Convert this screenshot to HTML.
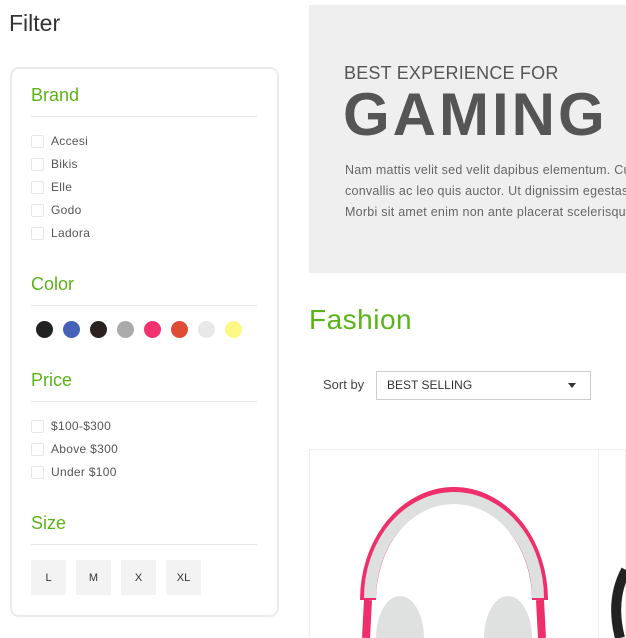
<!DOCTYPE html>
<html><head><style>
html,body{margin:0;width:626px;height:638px;overflow:hidden}
body{background:#fff;font-family:"Liberation Sans",sans-serif;position:relative;color:#555}
.a{position:absolute}
h1{position:absolute;left:9px;top:10px;margin:0;font-weight:normal;font-size:23px;color:#333}
.card{position:absolute;left:10px;top:67px;width:265px;height:546px;border:2px solid #ebebeb;border-radius:9px}
.h{position:absolute;left:31px;font-size:18px;color:#5bb31a}
.ln{position:absolute;left:31px;width:226px;height:1px;background:#e6e6e6}
.cb{position:absolute;left:31px;width:11px;height:11px;border:1px solid #e6e6e6;border-radius:2px}
.lb{position:absolute;left:51px;font-size:12px;color:#555;letter-spacing:.3px}
.dot{position:absolute;top:321px;width:17px;height:17px;border-radius:50%}
.sz{position:absolute;top:560px;width:35px;height:35px;background:#f3f3f3;font-size:11px;color:#333;text-align:center;line-height:37px}
</style></head><body>
<h1>Filter</h1>
<div class="card"></div>
<div class="h" style="top:85px">Brand</div><div class="ln" style="top:116px"></div>
<div class="cb" style="top:135px"></div><div class="lb" style="top:134px">Accesi</div>
<div class="cb" style="top:158px"></div><div class="lb" style="top:157px">Bikis</div>
<div class="cb" style="top:181px"></div><div class="lb" style="top:180px">Elle</div>
<div class="cb" style="top:204px"></div><div class="lb" style="top:203px">Godo</div>
<div class="cb" style="top:227px"></div><div class="lb" style="top:226px">Ladora</div>
<div class="h" style="top:274px">Color</div><div class="ln" style="top:305px"></div>
<div class="dot" style="left:36px;background:#222"></div>
<div class="dot" style="left:63px;background:#4561b8"></div>
<div class="dot" style="left:90px;background:#2a2220"></div>
<div class="dot" style="left:117px;background:#aaa"></div>
<div class="dot" style="left:144px;background:#f1326f"></div>
<div class="dot" style="left:171px;background:#e04b36"></div>
<div class="dot" style="left:198px;background:#e8e8e8"></div>
<div class="dot" style="left:225px;background:#fdf784"></div>
<div class="h" style="top:370px">Price</div><div class="ln" style="top:401px"></div>
<div class="cb" style="top:420px"></div><div class="lb" style="top:419px">$100-$300</div>
<div class="cb" style="top:443px"></div><div class="lb" style="top:442px">Above $300</div>
<div class="cb" style="top:466px"></div><div class="lb" style="top:465px">Under $100</div>
<div class="h" style="top:513px">Size</div><div class="ln" style="top:544px"></div>
<div class="sz" style="left:31px">L</div><div class="sz" style="left:76px">M</div><div class="sz" style="left:121px">X</div><div class="sz" style="left:166px">XL</div>

<div class="a" style="left:309px;top:5px;width:317px;height:268px;background:#efefef"></div>
<div class="a" style="left:344px;top:63px;font-size:18px;color:#555;white-space:nowrap;letter-spacing:.2px">BEST EXPERIENCE FOR</div>
<div class="a" style="left:343px;top:80px;font-size:60px;font-weight:bold;color:#555;letter-spacing:3px;white-space:nowrap">GAMING</div>
<div class="a" style="left:345px;top:160px;font-size:12.5px;line-height:21px;color:#666;white-space:nowrap;letter-spacing:.25px">Nam mattis velit sed velit dapibus elementum. Cu<br>convallis ac leo quis auctor. Ut dignissim egestas a<br>Morbi sit amet enim non ante placerat scelerisque</div>
<div class="a" style="left:309px;top:304px;font-size:28px;color:#5bb31a;letter-spacing:.5px">Fashion</div>
<div class="a" style="left:323px;top:377px;font-size:13px;color:#444">Sort by</div>
<div class="a" style="left:376px;top:371px;width:213px;height:27px;border:1px solid #ccc;font-size:12px;color:#333;line-height:27px;text-indent:10px">BEST SELLING</div>
<div class="a" style="left:568px;top:383px;border-left:4px solid transparent;border-right:4px solid transparent;border-top:5px solid #333"></div>
<div class="a" style="left:309px;top:449px;width:317px;height:189px;border:1px solid #eee;border-bottom:none;box-sizing:border-box"></div>
<div class="a" style="left:598px;top:449px;width:1px;height:189px;background:#eee"></div>
<svg class="a" style="left:300px;top:440px" width="326" height="198">
<path d="M68 160 A86 105 0 0 1 240 160" fill="none" stroke="#ef2f6c" stroke-width="16"/>
<path d="M70 158 A84 100 0 0 1 238 158" fill="none" stroke="#dde0df" stroke-width="12"/>
<path d="M68 160 L66 198 M240 160 L242 198" stroke="#ef2f6c" stroke-width="8"/>
<ellipse cx="100" cy="198" rx="24" ry="42" fill="#dfe1e0"/>
<ellipse cx="208" cy="198" rx="24" ry="42" fill="#dfe1e0"/>
<path d="M320 198 Q310 160 326 130" fill="none" stroke="#222" stroke-width="10"/>
</svg>
</body></html>
